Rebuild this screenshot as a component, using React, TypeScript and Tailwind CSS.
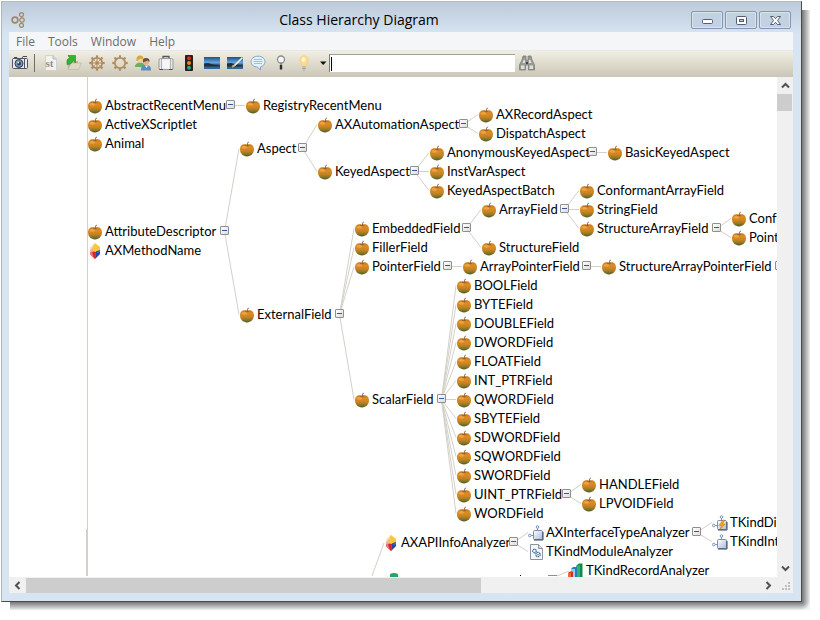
import React from "react";

type Kind = "apple" | "book" | "port" | "bolt" | "module" | "record";

interface TreeNode {
  label: string;
  x: number;
  y: number;
  toggle?: number;
  parent?: string;
  kind?: Kind;
}

const scalarFields = [
  "BOOLField",
  "BYTEField",
  "DOUBLEField",
  "DWORDField",
  "FLOATField",
  "INT_PTRField",
  "QWORDField",
  "SBYTEField",
  "SDWORDField",
  "SQWORDField",
  "SWORDField",
  "UINT_PTRField",
  "WORDField",
];

// x and y are the centre of the node's icon on the canvas
const nodes: TreeNode[] = [
  { label: "AbstractRecentMenu", x: 86, y: 29, toggle: 217 },
  { label: "RegistryRecentMenu", x: 244, y: 29, parent: "AbstractRecentMenu" },
  { label: "ActiveXScriptlet", x: 86, y: 48 },
  { label: "Animal", x: 86, y: 67 },
  { label: "AttributeDescriptor", x: 86, y: 155, toggle: 211 },
  { label: "AXMethodName", x: 86, y: 174, kind: "book" },
  { label: "Aspect", x: 238, y: 72, toggle: 289, parent: "AttributeDescriptor" },
  { label: "AXAutomationAspect", x: 316, y: 48, toggle: 450, parent: "Aspect" },
  { label: "AXRecordAspect", x: 477, y: 38, parent: "AXAutomationAspect" },
  { label: "DispatchAspect", x: 477, y: 57, parent: "AXAutomationAspect" },
  { label: "KeyedAspect", x: 316, y: 95, toggle: 401, parent: "Aspect" },
  { label: "AnonymousKeyedAspect", x: 428, y: 76, toggle: 579, parent: "KeyedAspect" },
  { label: "BasicKeyedAspect", x: 606, y: 76, parent: "AnonymousKeyedAspect" },
  { label: "InstVarAspect", x: 428, y: 95, parent: "KeyedAspect" },
  { label: "KeyedAspectBatch", x: 428, y: 114, parent: "KeyedAspect" },
  { label: "ExternalField", x: 238, y: 238, toggle: 326, parent: "AttributeDescriptor" },
  { label: "EmbeddedField", x: 353, y: 152, toggle: 453, parent: "ExternalField" },
  { label: "ArrayField", x: 480, y: 133, toggle: 551, parent: "EmbeddedField" },
  { label: "ConformantArrayField", x: 578, y: 114, parent: "ArrayField" },
  { label: "StringField", x: 578, y: 133, parent: "ArrayField" },
  { label: "StructureArrayField", x: 578, y: 152, toggle: 703, parent: "ArrayField" },
  { label: "Conf", x: 730, y: 142, parent: "StructureArrayField" },
  { label: "Point", x: 730, y: 161, parent: "StructureArrayField" },
  { label: "StructureField", x: 480, y: 171, parent: "EmbeddedField" },
  { label: "FillerField", x: 353, y: 171, parent: "ExternalField" },
  { label: "PointerField", x: 353, y: 190, toggle: 434, parent: "ExternalField" },
  { label: "ArrayPointerField", x: 461, y: 190, toggle: 573, parent: "PointerField" },
  { label: "StructureArrayPointerField", x: 600, y: 190, toggle: 766, parent: "ArrayPointerField" },
  { label: "ScalarField", x: 353, y: 323, toggle: 428, parent: "ExternalField" },
  ...scalarFields.map((label, i) => ({
    label,
    x: 455,
    y: 209 + i * 19,
    toggle: label === "UINT_PTRField" ? 553 : undefined,
    parent: "ScalarField",
  })),
  { label: "HANDLEField", x: 580, y: 408, parent: "UINT_PTRField" },
  { label: "LPVOIDField", x: 580, y: 427, parent: "UINT_PTRField" },
  { label: "AXAPIInfoAnalyzer", x: 382, y: 466, toggle: 500, kind: "book" },
  { label: "AXInterfaceTypeAnalyzer", x: 527, y: 456, toggle: 683, parent: "AXAPIInfoAnalyzer", kind: "port" },
  { label: "TKindModuleAnalyzer", x: 527, y: 475, parent: "AXAPIInfoAnalyzer", kind: "module" },
  { label: "TKindDis", x: 711, y: 446, parent: "AXInterfaceTypeAnalyzer", kind: "bolt" },
  { label: "TKindInt", x: 711, y: 465, parent: "AXInterfaceTypeAnalyzer", kind: "port" },
  { label: "TKindRecordAnalyzer", x: 567, y: 494, kind: "record" },
];

const byLabel = new Map(nodes.map((n) => [n.label, n]));

function NodeIcon({ kind = "apple" }: { kind?: Kind }) {
  if (kind === "book")
    return (
      <svg width="16" height="16" viewBox="0 0 16 16" className="shrink-0">
        <path d="M8 0 13 4V11L8 16 3 11V5Z" fill="#f6c83c" />
        <path d="M8 0 3 5V11L6 4Z" fill="#f7e9b4" />
        <path d="M3 7 6 4 5.500 11 3 11Z" fill="#f3b49a" />
        <path d="M3 11 6 8.500 9 9 8 16Z" fill="#d8232b" />
        <path d="M3 9 5 8.500 6.500 14 3 11Z" fill="#e0778a" />
        <path d="M9 8.500 13 7V11L8 16Z" fill="#1f48a8" />
        <path d="M10 9 13 7.500V9L10.500 10.500Z" fill="#3d6ccb" />
      </svg>
    );
  if (kind === "port" || kind === "bolt")
    return (
      <svg width="16" height="16" viewBox="0 0 16 16" className="shrink-0">
        <path d="M9.500 3V6M3 10.500H6" stroke="#8193b0" fill="none" />
        <circle cx="9.500" cy="2" r="1.300" fill="#fff" stroke="#7990b5" />
        <circle cx="1.800" cy="10.500" r="1.300" fill="#fff" stroke="#7990b5" />
        <rect x="5.500" y="5.500" width="9" height="9" rx="1" fill="url(#boxFill)" stroke="#7b8dac" />
        <path d="M6 15H15V7" stroke="#34445f" fill="none" />
        {kind === "bolt" && <path d="M11 5 7 10.500H9.500L8 14.500 13 9H10.500L12.500 5Z" fill="#f7a51c" stroke="#c9690d" strokeWidth=".5" />}
      </svg>
    );
  if (kind === "module")
    return (
      <svg width="16" height="16" viewBox="0 0 16 16" className="shrink-0">
        <path d="M2.500.5H10.500L14.500 4.500V15.500H2.500Z" fill="#f7f9fc" stroke="#8b93a1" />
        <path d="M10.500.5V4.500H14.500" fill="#d9dee6" stroke="#8b93a1" />
        <circle cx="6.500" cy="7" r="1.800" fill="none" stroke="#2f629b" strokeWidth="1.200" strokeDasharray="1.500 .6" />
        <circle cx="10" cy="10.500" r="2.200" fill="none" stroke="#2f629b" strokeWidth="1.200" strokeDasharray="1.500 .6" />
        <circle cx="10" cy="10.500" r=".7" fill="#2f629b" />
      </svg>
    );
  if (kind === "record")
    return (
      <svg width="16" height="16" viewBox="0 0 16 16" className="shrink-0">
        <path d="M9 2 11 .5H14.500V14L12 16H9Z" fill="#12894c" />
        <path d="M8 2.500H12V16H8Z" fill="#2fb46c" />
        <path d="M3 6 5 4H9V14L7 16H3Z" fill="#2f78c8" />
        <path d="M3 6H7V16H3Z" fill="#8fd0f3" />
        <path d="M0 10 2 8.500H5V16H0Z" fill="#d8301e" />
        <path d="M0 10H3V16H0Z" fill="#f0673c" />
      </svg>
    );
  return (
    <svg width="16" height="16" viewBox="0 0 16 16" className="shrink-0">
      <path d="M8 3.700C5.500 2.600 1 3.300 1 8.300 1 12.500 4 15.400 8 15.400s7-2.900 7-7.100c0-5-4.500-5.700-7-4.600Z" fill="url(#appleFill)" />
      <ellipse cx="5.500" cy="6.300" rx="2.800" ry="1.500" fill="#f3ad50" opacity=".7" />
      <path d="M6 4.400Q8 5.400 10 4.400" stroke="#95601c" strokeWidth=".7" fill="none" />
      <path d="M8 4.800Q8.200 2.500 9.500.8" stroke="#85503a" strokeWidth="1" fill="none" />
    </svg>
  );
}

function Toggle({ label }: { label: string }) {
  return (
    <button
      type="button"
      aria-label={label}
      aria-expanded="true"
      className="flex size-[9px] items-center justify-center rounded-[1px] border border-[#8e8f8f] bg-linear-to-br from-white to-[#dcdcdc]"
    >
      <span className="h-px w-[5px] bg-[#3355a8]" />
    </button>
  );
}

function Diagram() {
  return (
    <div className="relative min-w-0 flex-1 overflow-hidden bg-white font-[Lato,sans-serif] text-[13px] leading-4 text-black">
      <svg className="absolute inset-0 size-full" stroke="#d4d0c8" fill="none">
        <defs>
          <linearGradient id="appleFill" x1="0" y1="0" x2="0" y2="1">
            <stop offset="0" stopColor="#c9781a" />
            <stop offset=".25" stopColor="#dc8d24" />
            <stop offset=".55" stopColor="#cb8322" />
            <stop offset=".78" stopColor="#8f7828" />
            <stop offset="1" stopColor="#4f5c24" />
          </linearGradient>
          <linearGradient id="boxFill" x1="0" y1="0" x2="1" y2="1">
            <stop offset="0" stopColor="#ffffff" />
            <stop offset="1" stopColor="#a9bbd8" />
          </linearGradient>
        </defs>
        <path d="M78.500 0V499M77.500 452V499" />
        {nodes.map((n) => {
          const parent = n.parent ? byLabel.get(n.parent) : undefined;
          if (!parent || parent.toggle === undefined) return null;
          return <line key={n.label} x1={parent.toggle + 4.5} y1={parent.y - 0.5} x2={n.x - 8} y2={n.y - 0.5} />;
        })}
        <path d="M363 499 375 466M548 499 560 494" />
        <path d="M381 500V497Q385 495 389 497V500Z" fill="#21a862" stroke="none" />
        <path d="M511 498.500H512" stroke="#111" />
        <path d="M539 498.500H548" stroke="#8e8f8f" />
      </svg>
      {nodes.map((n) => (
        <React.Fragment key={n.label}>
          <div className="absolute flex items-start gap-[2px] whitespace-nowrap" style={{ left: n.x - 8, top: n.y - 9 }}>
            <span className="pt-px">
              <NodeIcon kind={n.kind} />
            </span>
            <span>{n.label}</span>
          </div>
          {n.toggle !== undefined && (
            <div className="absolute" style={{ left: n.toggle, top: n.y - 6 }}>
              <Toggle label={"Collapse " + n.label} />
            </div>
          )}
        </React.Fragment>
      ))}
    </div>
  );
}

const teeth = [0, 45, 90, 135, 180, 225, 270, 315];

function Gear({ spokes }: { spokes: boolean }) {
  return (
    <svg width="16" height="16" viewBox="0 0 16 16" fill="none" stroke="#b08a5c">
      <circle cx="8" cy="8" r="5.200" strokeWidth="1.700" />
      {teeth.map((a) => (
        <path key={a} d="M8 .3V2.500" strokeWidth="2.200" transform={"rotate(" + a + " 8 8)"} />
      ))}
      {spokes && <path d="M3 8H13M8 3V13" strokeWidth="1" />}
      {spokes && <path d="M4.500 4.500 11.500 11.500M11.500 4.500 4.500 11.500" strokeWidth=".6" />}
      {spokes && <circle cx="8" cy="8" r="1.200" fill="#b08a5c" />}
    </svg>
  );
}

function Landscape({ pen }: { pen: boolean }) {
  return (
    <svg width="16" height="16" viewBox="0 0 16 16">
      <defs>
        <linearGradient id="sky" x1="0" y1="0" x2="0" y2="1">
          <stop offset="0" stopColor="#1d4f8a" />
          <stop offset=".5" stopColor="#6cabdd" />
          <stop offset=".6" stopColor="#3c5f78" />
          <stop offset="1" stopColor="#2f689f" />
        </linearGradient>
      </defs>
      <rect y="2" width="16" height="12" fill="url(#sky)" />
      <path d="M0 8.500 4 8 9 9.500 16 10.500V11.500H0Z" fill="#1c2f3a" />
      {pen && <path d="M15.500 2.500 8 10 5.500 11.500" stroke="#f2ead6" strokeWidth="1.600" fill="none" />}
      {pen && <path d="M7.500 10.500 5 12" stroke="#c9a05e" strokeWidth="1.500" />}
    </svg>
  );
}

const tools: { name: string; icon: React.ReactNode }[] = [
  {
    name: "Source",
    icon: (
      <svg width="16" height="16" viewBox="0 0 16 16">
        <path d="M2.500.5H10L13.500 4V15.500H2.500Z" fill="#f2f2f0" stroke="#d2d1ca" />
        <path d="M10 .5V4H13.500" fill="#dcdcd8" stroke="#b9b8b2" />
        <text x="2.500" y="12" fontSize="11" fontWeight="bold" fontFamily="Liberation Serif, serif" fill="#8f8f8d">st</text>
      </svg>
    ),
  },
  {
    name: "Open",
    icon: (
      <svg width="16" height="16" viewBox="0 0 16 16">
        <path d="M1 4H5L6 6H12V14H2Z" fill="#b9b3a0" />
        <path d="M5 8H15.500L12.500 14.500H2Z" fill="#e0d8c2" stroke="#b9b19a" strokeWidth=".6" />
        <path d="M1 9.500V5L3.500 2.500 2 .5H9.500V8L7.500 5.500 4.500 9Z" fill="#35b52f" stroke="#1f8a20" strokeWidth=".6" />
      </svg>
    ),
  },
  { name: "Browse system", icon: <Gear spokes /> },
  { name: "Browse class", icon: <Gear spokes={false} /> },
  {
    name: "Users",
    icon: (
      <svg width="16" height="16" viewBox="0 0 16 16">
        <path d="M0 11Q1 7.500 5 7.500T10 11V12H0Z" fill="#6fae62" />
        <circle cx="5" cy="4.500" r="3" fill="#f3d0a4" />
        <path d="M1.500 6Q1 .5 5 .5T8.500 5L6 3.500Q3 4 2.500 6Z" fill="#d8a63a" />
        <path d="M6 14.500Q6 10 11 10T16 14.500V15.500H6Z" fill="#5b8cc4" />
        <circle cx="11" cy="7" r="3" fill="#e5b184" />
        <path d="M8 7.500Q7 3 11 3T14.500 7L12.500 5.500Z" fill="#6d5140" />
        <path d="M10 10.500 11.500 13 13 10.500Z" fill="#fff" />
      </svg>
    ),
  },
  {
    name: "Packages",
    icon: (
      <svg width="16" height="16" viewBox="0 0 16 16">
        <path d="M5 4V1.500H11V4" stroke="#55565a" strokeWidth="1.300" fill="none" />
        <rect x="1" y="3.500" width="14" height="11" rx="1.500" fill="#e7e7e7" stroke="#9a9a9a" />
        <path d="M3.500 4V14M12.500 4V14" stroke="#b5b5b5" />
        <path d="M4.500 4.500H11.500V13.500H4.500Z" fill="#f6f6f6" />
        <path d="M1.500 14.500H5M11 14.500H14.500" stroke="#4c4c4c" />
      </svg>
    ),
  },
  {
    name: "Tests",
    icon: (
      <svg width="16" height="16" viewBox="0 0 16 16">
        <rect x="4" width="8" height="16" rx="1" fill="#2b1d1a" />
        <circle cx="8" cy="3.200" r="2" fill="#e02a1c" />
        <circle cx="8" cy="8" r="2" fill="#e48a16" />
        <circle cx="8" cy="12.800" r="2" fill="#25a883" />
      </svg>
    ),
  },
  { name: "Workspace", icon: <Landscape pen={false} /> },
  { name: "View composer", icon: <Landscape pen /> },
  {
    name: "Transcript",
    icon: (
      <svg width="16" height="16" viewBox="0 0 16 16">
        <path d="M8 1.200C4 1.200 1 3.500 1 6.800c0 3 3 5.200 6.500 5.300L10.500 15V11.800C13.500 11 15 9 15 6.800 15 3.500 12 1.200 8 1.200Z" fill="#e2f1fa" stroke="#7fa8c6" />
        <path d="M4 4.500H12M3.500 6.500H12.500M4 8.500H12" stroke="#9cc3dc" />
      </svg>
    ),
  },
  {
    name: "Find",
    icon: (
      <svg width="16" height="16" viewBox="0 0 16 16">
        <circle cx="8" cy="4.500" r="3.500" fill="#f7f7f7" stroke="#8b8b8b" strokeWidth="1.300" />
        <path d="M8 8V10.500" stroke="#777" strokeWidth="1.300" />
        <path d="M8 10V14.500" stroke="#2e2e2e" strokeWidth="2.400" />
      </svg>
    ),
  },
  {
    name: "Tip",
    icon: (
      <svg width="16" height="16" viewBox="0 0 16 16">
        <path d="M8 .8C5.300.8 3.800 2.800 3.800 5c0 2.500 2 3 2.200 6H10c.2-3 2.200-3.500 2.200-6C12.200 2.800 10.700.8 8 .8Z" fill="#fbdc8d" stroke="#f5cf86" />
        <ellipse cx="7.500" cy="4.500" rx="2" ry="2.500" fill="#fff4cd" />
        <path d="M6.200 12H9.800M6.200 13.500H9.800M7 15H9" stroke="#a9a69a" />
      </svg>
    ),
  },
];

function Toolbar() {
  return (
    <div className="flex h-[26px] shrink-0 items-center bg-linear-to-b from-[#f1efe4] to-[#cbc7b7] pr-2 pb-[2px] pl-[3px]">
      <button type="button" aria-label="Snapshot">
        <svg width="16" height="16" viewBox="0 0 16 16">
          <path d="M2 2.500H5V4M10 3 11 1.500H15" stroke="#444c59" fill="none" />
          <rect x=".5" y="3.500" width="15" height="10" rx="1" fill="#e6eaf0" stroke="#4c5768" />
          <path d="M12.500 4V13" stroke="#4b5564" />
          <circle cx="7" cy="8.500" r="4" fill="#8596ad" stroke="#2e3948" />
          <circle cx="7" cy="8.500" r="2" fill="#26456e" />
          <circle cx="6.200" cy="7.500" r=".9" fill="#eaf3ff" />
        </svg>
      </button>
      <span className="mr-2 ml-[6px] h-[18px] w-px bg-[#6f6e68]" />
      <div className="flex gap-[7px]">
        {tools.map((t) => (
          <button key={t.name} type="button" aria-label={t.name}>
            {t.icon}
          </button>
        ))}
      </div>
      <button type="button" aria-label="More tips" className="mr-[2px] ml-[7px]">
        <svg width="8" height="8" viewBox="0 0 8 8">
          <path d="M1 2.500H7.500L4.200 6Z" fill="#111" />
        </svg>
      </button>
      <div className="flex h-[18px] w-[186px] items-center border-t border-l border-[#7c7b76] border-t-[#a0a0a0] bg-white pl-px">
        <span className="h-[14px] w-px bg-black" />
        <input type="text" aria-label="Find class" className="h-full min-w-0 flex-1 px-1 font-[Lato,sans-serif] text-[13px] outline-none" />
      </div>
      <button type="button" aria-label="Search" className="ml-1">
        <svg width="16" height="16" viewBox="0 0 16 16">
          <path d="M4 1H7V4L7.500 6H8.500L9 4V1H12L13 5 15.500 10V15H9.500V10H6.500V15H.5V10L3 5Z" fill="#9a9a96" stroke="#74746f" strokeWidth=".7" />
          <path d="M2 10.500H5.500V14H2ZM10.500 10.500H14V14H10.500ZM4.500 5H6V8H3.500ZM10 5H11.500L12.500 8H10Z" fill="#deded9" />
          <path d="M7 7H9V9H7Z" fill="#444" />
        </svg>
      </button>
    </div>
  );
}

function Arrow({ d, name }: { d: string; name: string }) {
  return (
    <button type="button" aria-label={name} className="flex size-[17px] shrink-0 items-center justify-center">
      <svg width="9" height="9" viewBox="0 0 9 9" fill="none" stroke="#505050" strokeWidth="2">
        <path d={d} />
      </svg>
    </button>
  );
}

const windowButtons = [
  {
    name: "Minimize",
    icon: <rect x="2.500" y="6.500" width="10" height="4" rx="1" fill="#fff" stroke="#555d70" />,
  },
  {
    name: "Maximize",
    icon: (
      <>
        <rect x="2.500" y="3.500" width="10" height="8" rx="1" fill="#fff" stroke="#555d70" />
        <rect x="5.500" y="6.500" width="4" height="2" fill="#b9c9dc" stroke="#555d70" />
      </>
    ),
  },
  {
    name: "Close",
    icon: (
      <path
        d="M2.500 3.500H5.500L7.500 5.700 9.500 3.500H12.500L9.500 7.500 12.500 11.500H9.500L7.500 9.300 5.500 11.500H2.500L5.500 7.500Z"
        fill="#fff"
        stroke="#555d70"
      />
    ),
  },
];

function TitleBar() {
  return (
    <header className="flex h-[30px] shrink-0 items-center pt-[6px] pr-[2px]">
      <svg width="16" height="16" viewBox="0 0 16 16" fill="none" stroke="#a08763" className="ml-[2px]">
        <circle cx="4" cy="8" r="2.900" strokeWidth="1.600" />
        <circle cx="10.500" cy="2.700" r="2" strokeWidth="1.200" />
        <circle cx="11" cy="8" r="2.200" strokeWidth="1.200" />
        <circle cx="10.500" cy="13.300" r="2" strokeWidth="1.200" />
      </svg>
      <h1 className="flex-1 text-center text-[14px] leading-5 text-black">Class Hierarchy Diagram</h1>
      <div className="flex gap-[2px]">
        {windowButtons.map((b) => (
          <button
            key={b.name}
            type="button"
            aria-label={b.name}
            className="flex h-[18px] w-8 items-center justify-center rounded-[2px] border border-[#8597b0] bg-[#c3d2e2] shadow-[inset_0_0_0_1px_#d6e2ee]"
          >
            <svg width="15" height="15" viewBox="0 0 15 15">
              {b.icon}
            </svg>
          </button>
        ))}
      </div>
    </header>
  );
}

export default function App() {
  return (
    <div className="flex h-screen bg-white pt-px pr-[18px] pb-[18px] pl-px font-['Open_Sans',sans-serif]">
      <div className="relative flex min-w-0 flex-1">
        <div className="absolute top-[9px] -right-2 -bottom-2 left-[9px] bg-linear-to-b from-[#777777] from-[calc(100%-8px)] to-[#f0f0f0]" />
        <div className="absolute top-[9px] -right-2 bottom-0 w-2 bg-linear-to-r from-[#777777] to-[#f0f0f0]" />
        <div className="absolute -right-2 -bottom-2 size-2 bg-white" />
        <div className="absolute -right-2 -bottom-2 size-2 bg-[radial-gradient(circle_at_top_left,#777777,#f4f4f4_8px)]" />
        <main className="relative flex min-w-0 flex-1 flex-col border border-t-[#b4bcb8] border-r-[#4a4a4a] border-b-[#4a4a4a] border-l-[#aeb4b8] bg-[#d7e4f2] bg-linear-to-b from-[#bccad9] to-[#d7e4f2] to-[32px] pr-2 pb-2 pl-[7px]">
          <TitleBar />
          <nav className="flex h-[18px] shrink-0 items-center gap-[13px] bg-[#f5f6f7] pt-[2px] pl-[7px] text-[12px] leading-4 text-[#6d6d6d]">
            {["File", "Tools", "Window", "Help"].map((m) => (
              <button key={m} type="button">
                {m}
              </button>
            ))}
          </nav>
          <div className="h-px shrink-0 bg-[#e8e8ec]" />
          <Toolbar />
          <div className="flex min-h-0 flex-1">
            <Diagram />
            <div className="flex w-4 shrink-0 flex-col items-center bg-[#f0f0f0]">
              <Arrow name="Scroll up" d="M1 6.500 4.500 3 8 6.500" />
              <div className="h-[17px] w-[15px] self-start bg-[#cdcdcd]" />
              <div className="flex-1" />
              <Arrow name="Scroll down" d="M1 2.500 4.500 6 8 2.500" />
            </div>
          </div>
          <div className="flex h-4 shrink-0 items-center bg-[#f0f0f0]">
            <Arrow name="Scroll left" d="M6.500 1 3 4.500 6.500 8" />
            <div className="flex flex-1">
              <div className="h-[15px] w-[62%] bg-[#cdcdcd]" />
            </div>
            <Arrow name="Scroll right" d="M2.500 1 6 4.500 2.500 8" />
            <svg width="16" height="16" viewBox="0 0 16 16" fill="#bfbfbf">
              <path d="M11 5h2v2h-2zM8 8h2v2H8zM11 8h2v2h-2zM5 11h2v2H5zM8 11h2v2H8zM11 11h2v2h-2z" />
            </svg>
          </div>
        </main>
      </div>
    </div>
  );
}
